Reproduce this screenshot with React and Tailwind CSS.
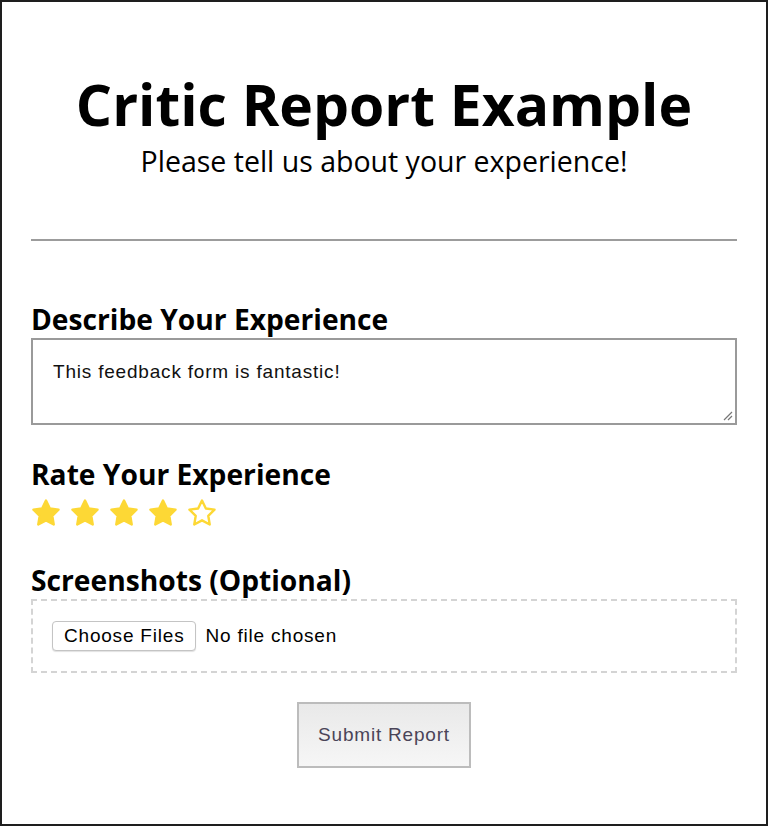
import React, { useState } from 'react';

const Star = ({ filled }) => (
  <svg width="32" height="32" viewBox="0 0 24 24" className="block">
    <path
      d="M12 2.6l2.9 6 6.5.9-4.7 4.6 1.1 6.5L12 17.5l-5.8 3.1 1.1-6.5L2.6 9.5l6.5-.9z"
      fill={filled ? '#fdd835' : 'none'}
      stroke="#fdd835"
      strokeWidth="1.8"
      strokeLinejoin="round"
    />
  </svg>
);

const App = () => {
  const [rating] = useState(4);

  return (
    <div className="w-[768px] h-[826px] border-2 border-[#1e1e1e] bg-white px-[29px] pt-[70px] font-['Open_Sans',sans-serif] text-black">
      <div className="text-center">
        <h1 className="text-[57px] font-bold leading-[64px]">Critic Report Example</h1>
        <p className="text-[28.5px] leading-[34px] mt-[8px]">Please tell us about your experience!</p>
      </div>

      <hr className="mt-[61px] border-t-2 border-[#9c9c9c]" />

      <h2 className="mt-[59px] text-[28.2px] font-bold leading-[38px]">Describe Your Experience</h2>
      <div className="relative h-[87px] border-2 border-[#9a9a9a] px-[20px] pt-[21px] font-['Liberation_Sans',sans-serif] text-[19px] leading-[22px] tracking-[0.8px] text-[#111]">
        This feedback form is fantastic!
        <svg className="absolute right-[2px] bottom-[2px]" width="12" height="12" viewBox="0 0 12 12">
          <path d="M11 3L3 11M11 7L7 11" stroke="#777" strokeWidth="1.2" />
        </svg>
      </div>

      <h2 className="mt-[30px] text-[28.2px] font-bold leading-[38px]">Rate Your Experience</h2>
      <div className="flex gap-[7px] ml-[-1px] mt-[4px]">
        {[1, 2, 3, 4, 5].map((n) => (
          <Star key={n} filled={n <= rating} />
        ))}
      </div>

      <h2 className="mt-[32px] text-[28.2px] font-bold leading-[38px]">Screenshots (Optional)</h2>
      <div className="h-[74px] border-2 border-dashed border-[#d4d4d4] flex items-center px-[19px] font-['Liberation_Sans',sans-serif] text-[19px] tracking-[0.8px]">
        <span className="border border-[#c4c4c4] rounded-[4px] bg-white px-[11px] h-[30px] flex items-center shadow-[0_1px_1px_rgba(0,0,0,0.12)]">
          Choose Files
        </span>
        <span className="ml-[9px]">No file chosen</span>
      </div>

      <div className="flex justify-center mt-[29px]">
        <button className="w-[174px] h-[66px] border-2 border-[#bcbcbc] bg-gradient-to-b from-[#e9e9e9] to-[#f6f6f6] font-['Liberation_Sans',sans-serif] text-[19px] tracking-[0.8px] text-[#4a4458]">
          Submit Report
        </button>
      </div>
    </div>
  );
};

export default App;
